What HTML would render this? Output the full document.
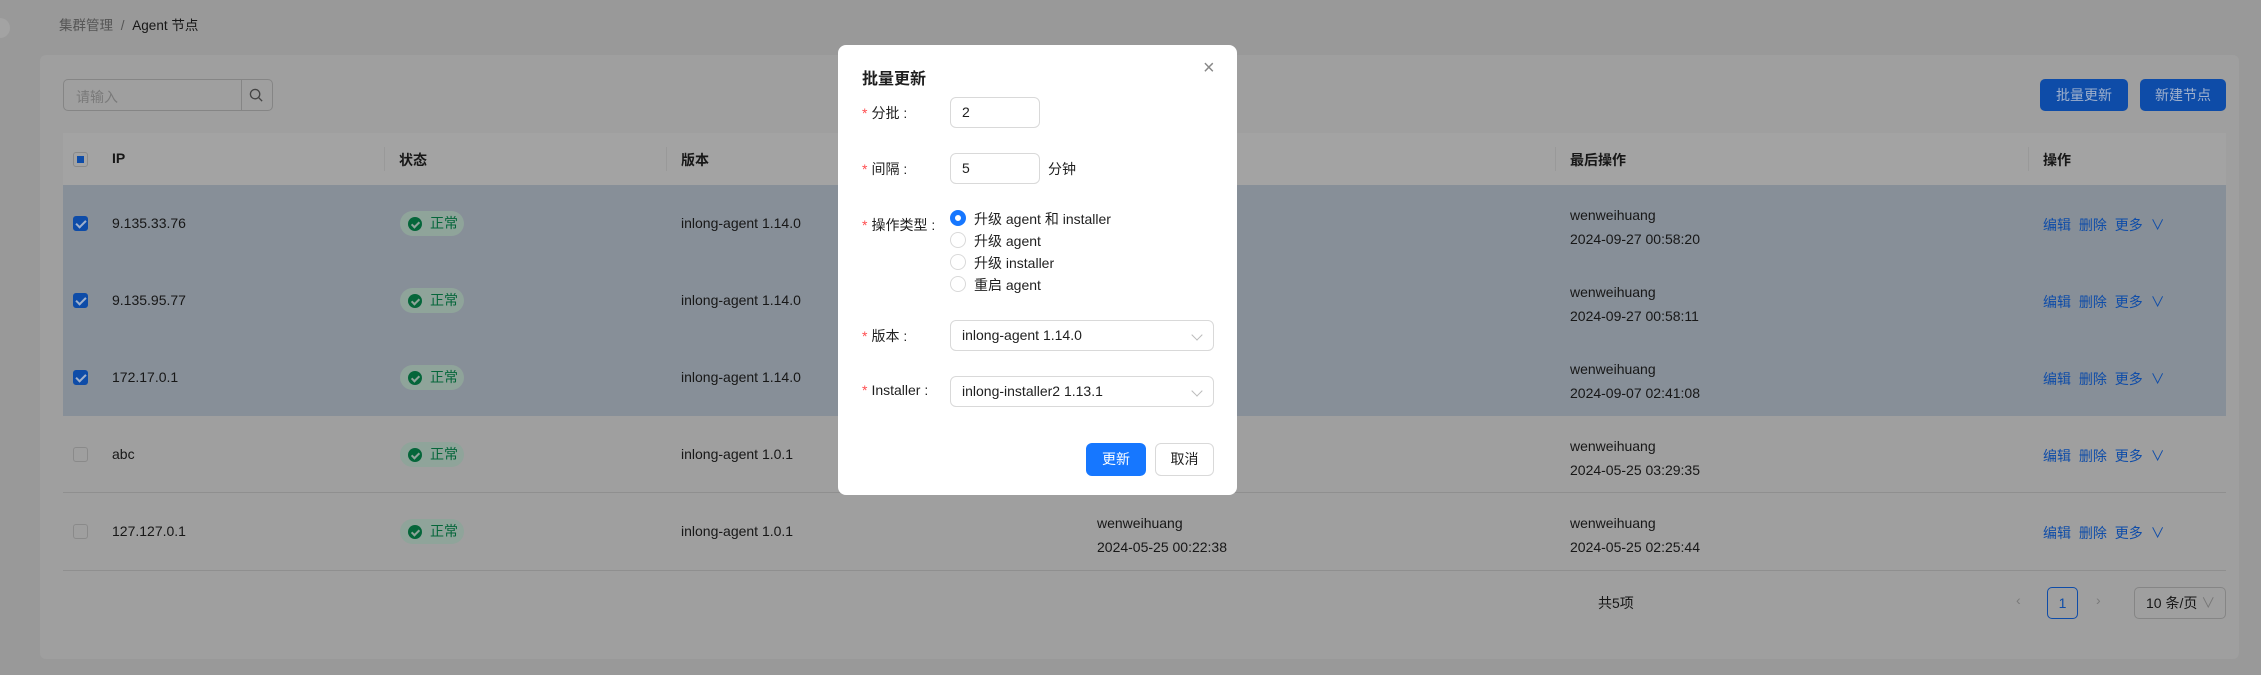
<!DOCTYPE html>
<html><head><meta charset="utf-8"><style>
*{box-sizing:border-box;margin:0;padding:0}
body{width:2261px;height:675px;overflow:hidden;background:#999;font-family:"Liberation Sans","Noto Sans CJK SC",sans-serif;font-size:14px;color:#171717;position:relative}
.abs{position:absolute}
.card{left:40px;top:55px;width:2199px;height:604px;background:#9f9f9f;border-radius:6px}
.inp{border:1px solid #858585;border-radius:5px;background:#9f9f9f}
.btn{background:#0e4ca8;color:#9fb0cc;border-radius:5px;text-align:center;line-height:32px}
.th{top:133px;height:52px;left:63px;width:2163px;background:#a3a3a3}
.row{left:63px;width:2163px;height:77px}
.sel{background:#878f98}
.cell{position:absolute;white-space:nowrap}
.cb{position:absolute;left:10px;width:15px;height:15px;border-radius:3px;border:1px solid #8a8a8a;background:#a3a3a3}
.cb.on{background:#0e4ca8;border-color:#0e4ca8}
.cb.on:after{content:"";position:absolute;left:4px;top:1px;width:4px;height:8px;border:solid #9fb0cc;border-width:0 2px 2px 0;transform:rotate(45deg)}
.tag{position:absolute;left:337px;height:25px;width:64px;border-radius:13px;background:#8fa49a;color:#05663a;line-height:25px;padding-left:30px}
.tag:before{content:"";position:absolute;left:8px;top:6px;width:14px;height:14px;border-radius:50%;background:#05663a}
.tag:after{content:"";position:absolute;left:13px;top:9px;width:3px;height:6px;border:solid #8fa49a;border-width:0 2px 2px 0;transform:rotate(45deg)}
.op{position:absolute;left:1980px;color:#0e4ca8;word-spacing:4px}
.modal{left:838px;top:45px;width:399px;height:450px;background:#fff;border-radius:8px}
.lbl{position:absolute;left:24px;color:#1f1f1f}
.lbl b{color:#ff4d4f;font-weight:normal;margin-right:4px}
.mi{position:absolute;left:112px;border:1px solid #d9d9d9;border-radius:6px;height:31px;line-height:29px;padding-left:11px;color:#1f1f1f}
.radio{position:absolute;left:112px;width:16px;height:16px;border-radius:50%;border:1px solid #d9d9d9}
.rt{position:absolute;left:136px;color:#1f1f1f}
.chev{position:absolute;right:12px;top:10px;width:8px;height:8px;border:solid #bbb;border-width:0 1px 1px 0;transform:rotate(45deg)}
</style></head><body>
<div class="abs" style="left:-10px;top:18px;width:20px;height:20px;border-radius:50%;background:#a3a3a3"></div>
<div class="abs" style="left:59px;top:14px;color:#555;font-size:13.5px">集群管理 <span style="margin:0 4px">/</span> <span style="color:#171717">Agent 节点</span></div>
<div class="abs card"></div>
<div class="abs inp" style="left:63px;top:79px;width:210px;height:32px"><span style="position:absolute;left:12px;top:7px;color:#7a7a7a">请输入</span><div style="position:absolute;left:177px;top:0;width:1px;height:30px;background:#858585"></div><svg style="position:absolute;left:185px;top:8px" width="15" height="15" viewBox="0 0 16 16"><circle cx="6.5" cy="6.5" r="5" fill="none" stroke="#444" stroke-width="1.4"/><path d="M10.5 10.5L14 14" stroke="#444" stroke-width="1.4"/></svg></div>
<div class="abs btn" style="left:2040px;top:79px;width:88px;height:32px">批量更新</div>
<div class="abs btn" style="left:2140px;top:79px;width:86px;height:32px">新建节点</div>
<div class="abs th"><div class="cb" style="top:19px;background:#a3a3a3;border-color:#8a8a8a"><div style="position:absolute;left:3px;top:3px;width:7px;height:7px;background:#0e4ca8"></div></div>
<div class="cell" style="left:49px;top:17px;font-weight:bold">IP</div>
<div class="cell" style="left:336px;top:17px;font-weight:bold">状态</div>
<div class="cell" style="left:618px;top:17px;font-weight:bold">版本</div>
<div class="cell" style="left:1507px;top:17px;font-weight:bold">最后操作</div>
<div class="cell" style="left:1980px;top:17px;font-weight:bold">操作</div>
<div class="abs" style="left:321px;top:14px;width:1px;height:24px;background:#999"></div>
<div class="abs" style="left:603px;top:14px;width:1px;height:24px;background:#999"></div>
<div class="abs" style="left:1492px;top:14px;width:1px;height:24px;background:#999"></div>
<div class="abs" style="left:1965px;top:14px;width:1px;height:24px;background:#999"></div>
</div>
<div class="abs row sel" style="top:185px"></div><div class="abs row sel" style="top:262px"></div><div class="abs row sel" style="top:339px"></div>
<div class="abs" style="left:63px;top:492px;width:2163px;height:1px;background:#8f8f8f"></div>
<div class="abs" style="left:63px;top:570px;width:2163px;height:1px;background:#8f8f8f"></div>

<div class="abs row" style="top:185px"><div class="cb on" style="top:31px"></div><div class="cell" style="left:49px;top:30px">9.135.33.76</div><div class="tag" style="top:26px">正常</div><div class="cell" style="left:618px;top:30px">inlong-agent 1.14.0</div><div class="cell" style="left:1507px;top:18px;line-height:24px">wenweihuang<br>2024-09-27 00:58:20</div><div class="op" style="top:30px">编辑 删除 更多 ∨</div></div>
<div class="abs row" style="top:262px"><div class="cb on" style="top:31px"></div><div class="cell" style="left:49px;top:30px">9.135.95.77</div><div class="tag" style="top:26px">正常</div><div class="cell" style="left:618px;top:30px">inlong-agent 1.14.0</div><div class="cell" style="left:1507px;top:18px;line-height:24px">wenweihuang<br>2024-09-27 00:58:11</div><div class="op" style="top:30px">编辑 删除 更多 ∨</div></div>
<div class="abs row" style="top:339px"><div class="cb on" style="top:31px"></div><div class="cell" style="left:49px;top:30px">172.17.0.1</div><div class="tag" style="top:26px">正常</div><div class="cell" style="left:618px;top:30px">inlong-agent 1.14.0</div><div class="cell" style="left:1507px;top:18px;line-height:24px">wenweihuang<br>2024-09-07 02:41:08</div><div class="op" style="top:30px">编辑 删除 更多 ∨</div></div>
<div class="abs row" style="top:416px"><div class="cb" style="top:31px;background:#9f9f9f"></div><div class="cell" style="left:49px;top:30px">abc</div><div class="tag" style="top:26px">正常</div><div class="cell" style="left:618px;top:30px">inlong-agent 1.0.1</div><div class="cell" style="left:1507px;top:18px;line-height:24px">wenweihuang<br>2024-05-25 03:29:35</div><div class="op" style="top:30px">编辑 删除 更多 ∨</div></div>
<div class="abs row" style="top:493px"><div class="cb" style="top:31px;background:#9f9f9f"></div><div class="cell" style="left:49px;top:30px">127.127.0.1</div><div class="tag" style="top:26px">正常</div><div class="cell" style="left:618px;top:30px">inlong-agent 1.0.1</div><div class="cell" style="left:1034px;top:18px;line-height:24px">wenweihuang<br>2024-05-25 00:22:38</div><div class="cell" style="left:1507px;top:18px;line-height:24px">wenweihuang<br>2024-05-25 02:25:44</div><div class="op" style="top:30px">编辑 删除 更多 ∨</div></div>

<div class="abs" style="left:1598px;top:593px">共5项</div>
<div class="abs" style="left:2016px;top:592px;color:#7a7a7a">‹</div>
<div class="abs" style="left:2047px;top:587px;width:31px;height:32px;border:1px solid #0e4ca8;border-radius:5px;color:#0e4ca8;text-align:center;line-height:30px">1</div>
<div class="abs" style="left:2096px;top:592px;color:#7a7a7a">›</div>
<div class="abs inp" style="left:2134px;top:587px;width:92px;height:32px;padding-left:11px;line-height:30px">10 条/页 <span style="color:#777">∨</span></div>

<div class="abs modal">
<div class="abs" style="left:24px;top:20px;font-size:16px;font-weight:bold;color:#1f1f1f">批量更新</div>
<div class="abs" style="left:365px;top:12px;font-size:20px;color:#888">×</div>
<div class="lbl" style="top:58px"><b>*</b>分批 :</div>
<div class="mi" style="top:52px;width:90px">2</div>
<div class="lbl" style="top:114px"><b>*</b>间隔 :</div>
<div class="mi" style="top:108px;width:90px">5</div>
<div class="abs" style="left:210px;top:114px;color:#1f1f1f">分钟</div>
<div class="lbl" style="top:170px"><b>*</b>操作类型 :</div>
<div class="radio" style="top:165px;border:5px solid #1677ff"></div><div class="rt" style="top:164px">升级 agent 和 installer</div>
<div class="radio" style="top:187px"></div><div class="rt" style="top:186px">升级 agent</div>
<div class="radio" style="top:209px"></div><div class="rt" style="top:208px">升级 installer</div>
<div class="radio" style="top:231px"></div><div class="rt" style="top:230px">重启 agent</div>
<div class="lbl" style="top:281px"><b>*</b>版本 :</div>
<div class="mi" style="top:275px;width:264px">inlong-agent 1.14.0<div class="chev"></div></div>
<div class="lbl" style="top:337px"><b>*</b>Installer :</div>
<div class="mi" style="top:331px;width:264px">inlong-installer2 1.13.1<div class="chev"></div></div>
<div class="abs" style="left:248px;top:398px;width:60px;height:33px;background:#1677ff;border-radius:6px;color:#fff;text-align:center;line-height:33px">更新</div>
<div class="abs" style="left:317px;top:398px;width:59px;height:33px;border:1px solid #d9d9d9;border-radius:6px;color:#1f1f1f;text-align:center;line-height:31px">取消</div>
</div>
</body></html>
